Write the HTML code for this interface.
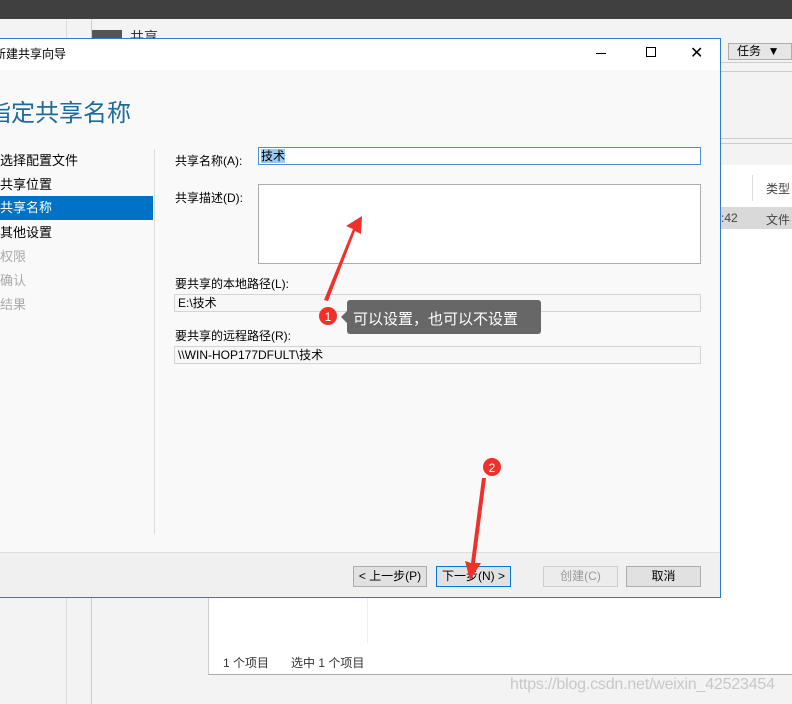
<!DOCTYPE html>
<html><head><meta charset="utf-8"><style>
*{margin:0;padding:0;box-sizing:border-box}
body{width:792px;height:704px;overflow:hidden;background:#f3f3f3;position:relative;font-family:"Liberation Sans","Microsoft YaHei","Noto Sans CJK SC",sans-serif;font-size:12px;color:#000}
.a{position:absolute}
.nav{position:absolute;left:0;font-size:13px;height:24px;line-height:24px;width:153px}
.lbl{position:absolute;left:175px;font-size:12px}
.inp{position:absolute;left:174px;width:527px;height:18px;border:1px solid #d4d4d4;background:#f7f7f7;font-size:12px;line-height:16px;padding-left:3px}
.btn{position:absolute;top:566px;height:21px;border:1px solid #adadad;background:#e1e1e1;font-size:12px;text-align:center;line-height:19px}
</style></head><body>
<div class="a" style="left:0;top:0;width:792px;height:19px;background:#404040"></div>
<div class="a" style="left:66px;top:19px;width:1px;height:685px;background:#ddd"></div>
<div class="a" style="left:91px;top:19px;width:1px;height:685px;background:#ccc"></div>
<div class="a" style="left:92px;top:30px;width:30px;height:8px;background:#555"></div>
<div class="a" style="left:130px;top:27px;font-size:14px;color:#333">共享</div>
<div class="a" style="left:728px;top:43px;width:64px;height:17px;border:1px solid #adadad;background:#e6e6e6;font-size:12px;padding-left:8px;line-height:15px">任务 &nbsp;▼</div>
<div class="a" style="left:721px;top:62px;width:71px;height:10px;border-bottom:1px solid #ccc;border-top:1px solid #ccc"></div>
<div class="a" style="left:721px;top:138px;width:71px;height:6px;border-top:1px solid #ccc;border-bottom:1px solid #ccc"></div>
<div class="a" style="left:721px;top:165px;width:71px;height:433px;background:#fff"></div>
<div class="a" style="left:752px;top:175px;width:1px;height:26px;background:#ddd"></div>
<div class="a" style="left:766px;top:180px;color:#444">类型</div>
<div class="a" style="left:721px;top:207px;width:71px;height:22px;background:#d9d9d9"></div>
<div class="a" style="left:721px;top:211px;color:#444">:42</div>
<div class="a" style="left:766px;top:211px;color:#444">文件</div>
<div class="a" style="left:208px;top:598px;width:584px;height:77px;background:#fff;border-left:1px solid #ccc;border-bottom:1px solid #aaa"></div>
<div class="a" style="left:367px;top:598px;width:1px;height:45px;background:#eee"></div>
<div class="a" style="left:223px;top:654px;color:#333">1 个项目</div>
<div class="a" style="left:291px;top:654px;color:#333">选中 1 个项目</div>
<div class="a" style="left:510px;top:676px;color:#c8c8c8;font-size:16px;letter-spacing:-0.2px">https://blog.csdn.net/weixin_42523454</div>

<div class="a" style="left:0;top:38px;width:721px;height:560px;background:#f9f9f9;border:1px solid #2b7bd1;border-left:none">
<div class="a" style="left:0;top:0;width:720px;height:31px;background:#fff"></div>
<div class="a" style="left:-6px;top:6px;font-size:12px">新建共享向导</div>
<div class="a" style="left:596px;top:14px;width:10px;height:1px;background:#000"></div>
<div class="a" style="left:646px;top:8px;width:10px;height:10px;border:1px solid #000"></div>
<div class="a" style="left:690px;top:4px;font-size:16px">✕</div>
<div class="a" style="left:-13px;top:54px;font-size:24px;color:#1e6b9a">指定共享名称</div>
<div class="a" style="left:154px;top:110px;width:1px;height:385px;background:#ddd"></div>
<div class="a" style="left:0;top:513px;width:720px;height:45px;background:#f0f0f0;border-top:1px solid #ddd"></div>
<div class="btn" style="left:353px;top:527px;width:74px">&lt; 上一步(P)</div>
<div class="btn" style="left:436px;top:527px;width:75px;border-color:#0078d7">下一步(N) &gt;</div>
<div class="btn" style="left:543px;top:527px;width:75px;color:#999;background:#ececec;border-color:#cfcfcf">创建(C)</div>
<div class="btn" style="left:626px;top:527px;width:75px">取消</div>
</div>

<div class="nav" style="top:149px">选择配置文件</div>
<div class="nav" style="top:173px">共享位置</div>
<div class="nav" style="top:196px;background:#0072c6;color:#fff">共享名称</div>
<div class="nav" style="top:221px">其他设置</div>
<div class="nav" style="top:245px;color:#aaa">权限</div>
<div class="nav" style="top:269px;color:#aaa">确认</div>
<div class="nav" style="top:293px;color:#aaa">结果</div>

<div class="lbl" style="top:152px">共享名称(A):</div>
<div class="inp" style="left:258px;width:443px;top:147px;background:#fff;border-color:#4a90d9;padding-left:2px"><span style="background:#99c9ef">技术</span></div>
<div class="lbl" style="top:189px">共享描述(D):</div>
<div class="inp" style="left:258px;width:443px;top:184px;height:80px;background:#fff;border-color:#abadb3"></div>
<div class="lbl" style="top:275px">要共享的本地路径(L):</div>
<div class="inp" style="top:294px">E:\技术</div>
<div class="lbl" style="top:327px">要共享的远程路径(R):</div>
<div class="inp" style="top:346px">\\WIN-HOP177DFULT\技术</div>

<svg class="a" style="left:0;top:0" width="792" height="704">
<polygon points="324,300 353,229 346,226 362,216 361,234 355,231 328,301" fill="#f0312b"/>
<polygon points="486,478 475,563 481,563 470,580 465,561 471,563 482,478" fill="#f0312b"/>
<circle cx="328" cy="316" r="9" fill="#f0312b"/>
<text x="328" y="321" fill="#fff" font-size="12" text-anchor="middle" font-family="Liberation Sans">1</text>
<circle cx="492" cy="467" r="9" fill="#f0312b"/>
<text x="492" y="472" fill="#fff" font-size="12" text-anchor="middle" font-family="Liberation Sans">2</text>
<rect x="347" y="300" width="194" height="34" rx="3" fill="#676767"/>
<polygon points="347,311 341,317 347,323" fill="#676767"/>
</svg>
<div class="a" style="left:353px;top:308px;color:#fff;font-size:15px">可以设置，也可以不设置</div>
</body></html>
